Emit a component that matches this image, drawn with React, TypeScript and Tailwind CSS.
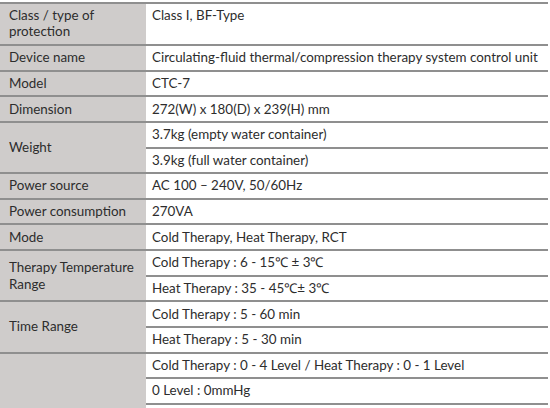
const rows: { label: string; values: string[]; tall?: boolean }[] = [
  { label: 'Class / type of protection', values: ['Class I, BF-Type'], tall: true },
  { label: 'Device name', values: ['Circulating-fluid thermal/compression therapy system control unit'] },
  { label: 'Model', values: ['CTC-7'] },
  { label: 'Dimension', values: ['272(W) x 180(D) x 239(H) mm'] },
  { label: 'Weight', values: ['3.7kg (empty water container)', '3.9kg (full water container)'] },
  { label: 'Power source', values: ['AC 100 – 240V, 50/60Hz'] },
  { label: 'Power consumption', values: ['270VA'] },
  { label: 'Mode', values: ['Cold Therapy, Heat Therapy, RCT'] },
  { label: 'Therapy Temperature Range', values: ['Cold Therapy : 6 - 15℃ ± 3℃', 'Heat Therapy : 35 - 45℃± 3℃'] },
  { label: 'Time Range', values: ['Cold Therapy : 5 - 60 min', 'Heat Therapy : 5 - 30 min'] },
  { label: '', values: ['Cold Therapy : 0 - 4 Level / Heat Therapy : 0 - 1 Level', '0 Level : 0mmHg', '\u00a0'] },
];

export default function App() {
  return (
    <div className="h-[408px] overflow-hidden bg-white pt-[2px] pr-[2px] font-['Lato',sans-serif] text-[13.4px] leading-[17px] text-[#2d2d2d]">
      <table className="w-full border-collapse border-t-2 border-[#8f8f8f]">
        <colgroup>
          <col className="w-[146px]" />
          <col />
        </colgroup>
        <tbody>
          {rows.map((r, i) =>
            r.values.map((v, j) => (
              <tr key={`${i}-${j}`}>
                {j === 0 && (
                  <td
                    rowSpan={r.values.length}
                    className={`border-b-2 border-[#8f8f8f] bg-[#cfcccb] pl-[9px] pr-2 ${r.tall ? 'h-[42px] pt-[3px] align-top leading-[16px]' : 'align-middle'}`}
                  >
                    {r.label}
                  </td>
                )}
                <td
                  className={`border-b-2 border-[#8f8f8f] pl-[6px] ${r.tall ? 'pt-[3px] align-top leading-[16px]' : 'h-[25.64px] align-middle'}`}
                >
                  {v}
                </td>
              </tr>
            ))
          )}
        </tbody>
      </table>
    </div>
  );
}
